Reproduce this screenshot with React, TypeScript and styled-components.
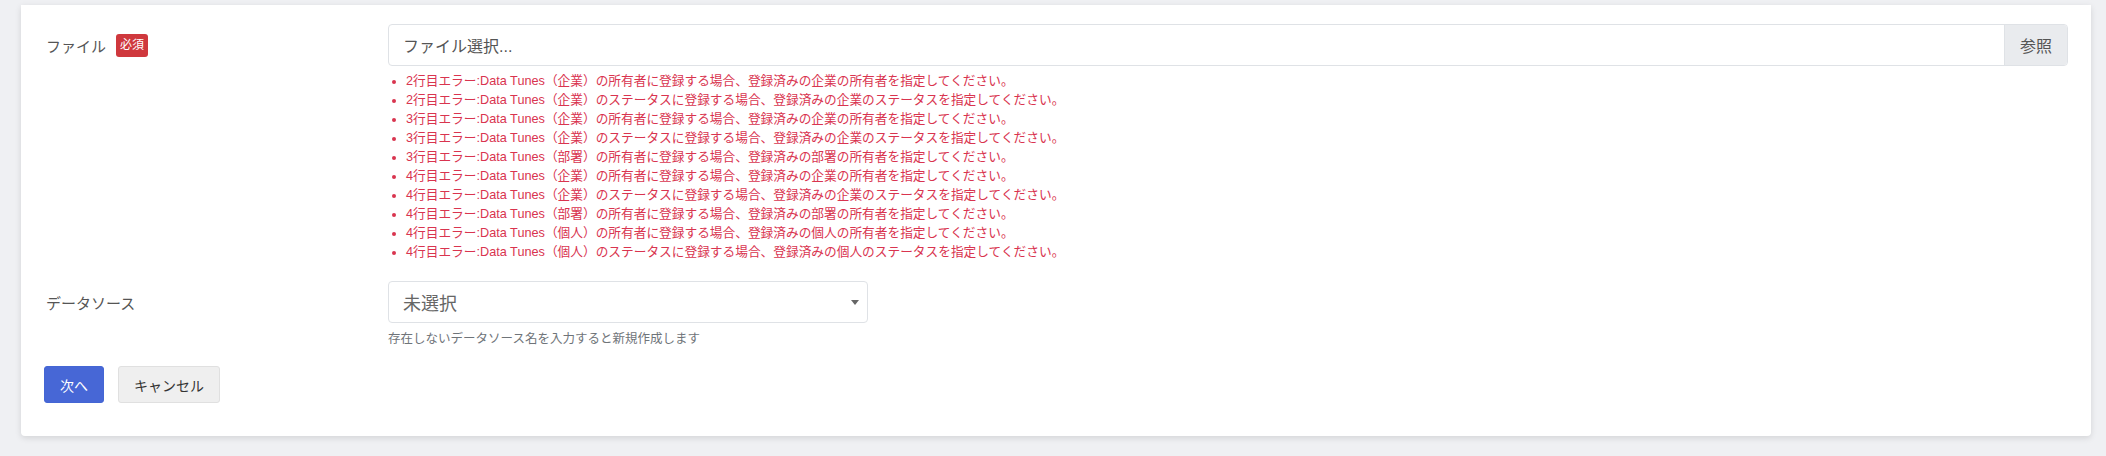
import React from "react";
import styled, { createGlobalStyle } from "styled-components";

const Global = createGlobalStyle`
  html, body { margin: 0; padding: 0; }
  body {
    background: #eff0f3;
    font-family: "Liberation Sans", "Noto Sans CJK JP", sans-serif;
    color: #4a4a4a;
  }
`;

const Page = styled.div`
  padding: 5px 15px 20px 21px;
  width: 2106px;
  box-sizing: border-box;
`;

const Card = styled.div`
  background: #fff;
  border-radius: 0 0 4px 4px;
  box-shadow: 0 2px 6px rgba(0, 0, 0, 0.12);
  padding: 19px 23px 34px 25px;
  height: 431px;
  box-sizing: border-box;
`;

const FormRow = styled.div<{ $gap?: number }>`
  display: grid;
  grid-template-columns: 342px 1fr;
  margin-bottom: ${(p) => p.$gap ?? 0}px;
`;

const Label = styled.div`
  display: flex;
  align-items: center;
  gap: 10px;
  height: 42px;
  font-size: 15px;
  color: #555;
`;

const Badge = styled.span`
  display: inline-block;
  background: #cf383d;
  color: #fff;
  font-size: 12px;
  line-height: 23px;
  height: 23px;
  padding: 0 4px;
  border-radius: 3px;
`;

const Field = styled.div``;

const FileGroup = styled.div`
  display: flex;
  height: 42px;
  border: 1px solid #dfe2e6;
  border-radius: 4px;
  box-sizing: border-box;
  overflow: hidden;
`;

const FileText = styled.div`
  flex: 1;
  display: flex;
  align-items: center;
  padding-left: 14px;
  font-size: 16px;
  color: #555;
`;

const Browse = styled.div`
  display: flex;
  align-items: center;
  padding: 0 15px;
  background: #e9ebee;
  border-left: 1px solid #dfe2e6;
  font-size: 16px;
  color: #555;
`;

const ErrorList = styled.ul`
  margin: 6px 0 0;
  padding: 0 0 0 18px;
  list-style: disc;
  color: #d9344f;
  font-size: 12.7px;
  line-height: 19px;
`;

const Select = styled.div`
  display: flex;
  align-items: center;
  justify-content: space-between;
  width: 480px;
  height: 42px;
  box-sizing: border-box;
  border: 1px solid #dfe2e6;
  border-radius: 4px;
  padding: 0 8px 0 14px;
  font-size: 18px;
  color: #666;
`;

const Caret = styled.span`
  width: 0;
  height: 0;
  border-left: 4px solid transparent;
  border-right: 4px solid transparent;
  border-top: 5px solid #666;
`;

const Help = styled.div`
  margin-top: 7px;
  font-size: 12.5px;
  line-height: 18px;
  color: #6f7479;
`;

const Actions = styled.div`
  display: flex;
  gap: 14px;
  margin-left: -2px;
`;

const Button = styled.button<{ $primary?: boolean }>`
  height: 37px;
  padding: 0 15px;
  border-radius: 3px;
  font-family: inherit;
  font-size: 14px;
  cursor: pointer;
  border: 1px solid ${(p) => (p.$primary ? "#4466d4" : "#e0e0e0")};
  background: ${(p) => (p.$primary ? "#4767d6" : "#efefef")};
  color: ${(p) => (p.$primary ? "#fff" : "#333")};
`;

const errors = [
  "2行目エラー:Data Tunes（企業）の所有者に登録する場合、登録済みの企業の所有者を指定してください。",
  "2行目エラー:Data Tunes（企業）のステータスに登録する場合、登録済みの企業のステータスを指定してください。",
  "3行目エラー:Data Tunes（企業）の所有者に登録する場合、登録済みの企業の所有者を指定してください。",
  "3行目エラー:Data Tunes（企業）のステータスに登録する場合、登録済みの企業のステータスを指定してください。",
  "3行目エラー:Data Tunes（部署）の所有者に登録する場合、登録済みの部署の所有者を指定してください。",
  "4行目エラー:Data Tunes（企業）の所有者に登録する場合、登録済みの企業の所有者を指定してください。",
  "4行目エラー:Data Tunes（企業）のステータスに登録する場合、登録済みの企業のステータスを指定してください。",
  "4行目エラー:Data Tunes（部署）の所有者に登録する場合、登録済みの部署の所有者を指定してください。",
  "4行目エラー:Data Tunes（個人）の所有者に登録する場合、登録済みの個人の所有者を指定してください。",
  "4行目エラー:Data Tunes（個人）のステータスに登録する場合、登録済みの個人のステータスを指定してください。",
];

export default function App() {
  return (
    <>
      <Global />
      <Page>
        <Card>
          <FormRow $gap={19}>
            <Label>
              ファイル<Badge>必須</Badge>
            </Label>
            <Field>
              <FileGroup>
                <FileText>ファイル選択...</FileText>
                <Browse>参照</Browse>
              </FileGroup>
              <ErrorList>
                {errors.map((e, i) => (
                  <li key={i}>{e}</li>
                ))}
              </ErrorList>
            </Field>
          </FormRow>
          <FormRow $gap={18}>
            <Label>データソース</Label>
            <Field>
              <Select>
                未選択
                <Caret />
              </Select>
              <Help>存在しないデータソース名を入力すると新規作成します</Help>
            </Field>
          </FormRow>
          <Actions>
            <Button $primary>次へ</Button>
            <Button>キャンセル</Button>
          </Actions>
        </Card>
      </Page>
    </>
  );
}
